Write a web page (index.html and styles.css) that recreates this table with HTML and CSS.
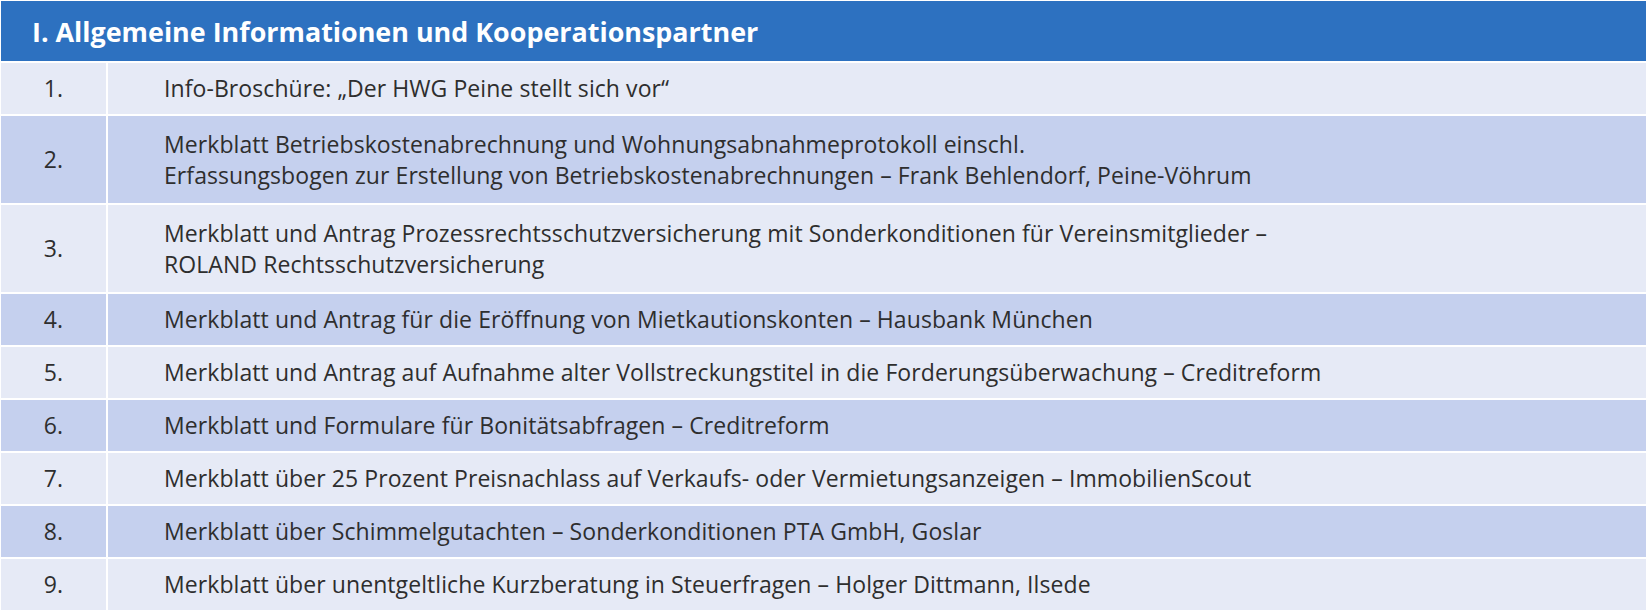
FILE: index.html
```html
<!DOCTYPE html>
<html lang="de">
<head>
<meta charset="utf-8">
<title>Allgemeine Informationen und Kooperationspartner</title>
<link rel="stylesheet" href="styles.css">
</head>
<body>
<div class="sheet">
  <div class="head">I. Allgemeine Informationen und Kooperationspartner</div>
  <div class="row light"><div class="num">1.</div><div class="text">Info-Broschüre: „Der HWG Peine stellt sich vor“</div></div>
  <div class="row dark tall"><div class="num">2.</div><div class="text">Merkblatt Betriebskostenabrechnung und Wohnungsabnahmeprotokoll einschl.<br>Erfassungsbogen zur Erstellung von Betriebskostenabrechnungen – Frank Behlendorf, Peine-Vöhrum</div></div>
  <div class="row light tall"><div class="num">3.</div><div class="text">Merkblatt und Antrag Prozessrechtsschutzversicherung mit Sonderkonditionen für Vereinsmitglieder –<br>ROLAND Rechtsschutzversicherung</div></div>
  <div class="row dark"><div class="num">4.</div><div class="text">Merkblatt und Antrag für die Eröffnung von Mietkautionskonten – Hausbank München</div></div>
  <div class="row light"><div class="num">5.</div><div class="text">Merkblatt und Antrag auf Aufnahme alter Vollstreckungstitel in die Forderungsüberwachung – Creditreform</div></div>
  <div class="row dark"><div class="num">6.</div><div class="text">Merkblatt und Formulare für Bonitätsabfragen – Creditreform</div></div>
  <div class="row light"><div class="num">7.</div><div class="text">Merkblatt über 25 Prozent Preisnachlass auf Verkaufs- oder Vermietungsanzeigen – ImmobilienScout</div></div>
  <div class="row dark"><div class="num">8.</div><div class="text">Merkblatt über Schimmelgutachten – Sonderkonditionen PTA GmbH, Goslar</div></div>
  <div class="row light"><div class="num">9.</div><div class="text">Merkblatt über unentgeltliche Kurzberatung in Steuerfragen – Holger Dittmann, Ilsede</div></div>
</div>
</body>
</html>
```
FILE: styles.css
```css
html, body {
  margin: 0;
  padding: 0;
  background: #ffffff;
}
body {
  font-family: "Open Sans", "Noto Sans", sans-serif;
  color: #2e2e2e;
}
.sheet {
  display: flex;
  flex-direction: column;
  gap: 2px;
  padding: 1px 1px 0 1px;
}
.head {
  height: 60px;
  background: #2d71c0;
  color: #ffffff;
  font-weight: 700;
  font-size: 26.9px;
  display: flex;
  align-items: center;
  padding-left: 31px;
}
.row {
  display: flex;
  gap: 2px;
  height: 51px;
  font-size: 23px;
  line-height: 31px;
  letter-spacing: 0.08px;
}
.row.tall {
  height: 87px;
}
.light .num, .light .text { background: #e6eaf6; }
.dark .num, .dark .text { background: #c5d0ee; }
.num {
  width: 105px;
  flex: none;
  display: flex;
  align-items: center;
  justify-content: center;
}
.text {
  flex: 1;
  display: flex;
  align-items: center;
  padding-left: 56px;
}
```
